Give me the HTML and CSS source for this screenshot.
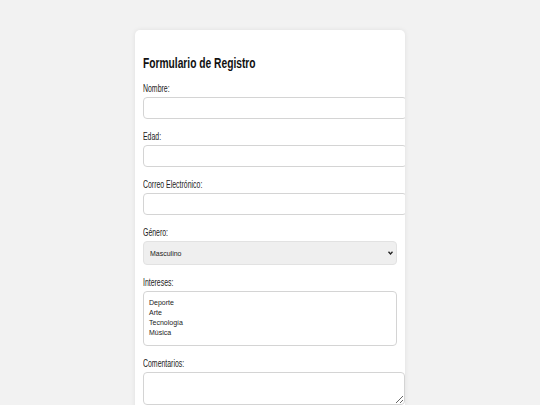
FILE: index.html
```html
<!DOCTYPE html>
<html lang="es">
<head>
<meta charset="utf-8">
<title>Formulario de Registro</title>
<link rel="stylesheet" href="styles.css">
</head>
<body>
<div class="page">
  <form class="card">
    <h2 class="title"><span class="narrow">Formulario de Registro</span></h2>
    <label class="label" for="nombre"><span class="narrow">Nombre:</span></label>
    <input class="field" type="text" id="nombre">
    <label class="label" for="edad"><span class="narrow">Edad:</span></label>
    <input class="field" type="text" id="edad">
    <label class="label" for="correo"><span class="narrow">Correo Electrónico:</span></label>
    <input class="field" type="text" id="correo">
    <label class="label" for="genero"><span class="narrow">Género:</span></label>
    <div class="select-wrap">
      <select class="select" id="genero">
        <option>Masculino</option>
        <option>Femenino</option>
      </select>
      <svg class="chevron" width="5" height="4" viewBox="0 0 5 4" aria-hidden="true"><path d="M0.5 0.8 L2.5 3 L4.5 0.8" fill="none" stroke="#222" stroke-width="1.3"/></svg>
    </div>
    <label class="label" for="intereses"><span class="narrow">Intereses:</span></label>
    <select class="multi" id="intereses" multiple>
      <option>Deporte</option>
      <option>Arte</option>
      <option>Tecnología</option>
      <option>Música</option>
    </select>
    <label class="label" for="comentarios"><span class="narrow">Comentarios:</span></label>
    <textarea class="area" id="comentarios"></textarea>
  </form>
</div>
</body>
</html>
```
FILE: styles.css
```css
html, body {
  margin: 0;
  padding: 0;
  background: #f2f2f2;
  font-family: "Liberation Sans", Arial, sans-serif;
  color: #1a1a1a;
}
.page {
  display: flex;
  justify-content: center;
  padding-top: 30px;
}
.card {
  width: 254px;
  padding: 8px 8px 20px;
  background: #fff;
  border-radius: 5px;
  box-shadow: 0 0 5px rgba(0, 0, 0, 0.08);
  overflow: hidden;
}
.narrow {
  display: inline-block;
  transform: scaleX(0.66);
  transform-origin: left center;
  white-space: nowrap;
}
.title {
  margin: 15px 0 9px;
  font-size: 15.5px;
  line-height: 19px;
  font-weight: bold;
  color: #111;
}
.label {
  display: block;
  font-size: 10.5px;
  line-height: 13px;
  padding-top: 1px;
  margin: 0 0 2px;
  color: #222;
}
.field {
  display: block;
  width: 100%;
  height: 10px;
  padding: 5px 4px;
  margin: 0 0 10px;
  border: 1px solid #d4d4d4;
  border-radius: 4px;
  background: #fff;
  font: inherit;
  font-size: 9px;
}
.select-wrap {
  position: relative;
  margin: 0 0 10px;
}
.select {
  display: block;
  box-sizing: border-box;
  width: 100%;
  height: 24px;
  margin: 0;
  padding: 0 6px;
  border: 1px solid #e2e2e2;
  border-radius: 4px;
  background: #efefef;
  font-family: inherit;
  font-size: 7px;
  color: #222;
  appearance: none;
  -webkit-appearance: none;
}
.chevron {
  position: absolute;
  right: 4px;
  top: 10px;
  pointer-events: none;
}
.multi {
  display: block;
  box-sizing: border-box;
  width: 100%;
  height: 55px;
  margin: 0 0 10px;
  padding: 7px 4px 4px;
  border: 1px solid #d4d4d4;
  border-radius: 4px;
  background: #fff;
  font-family: inherit;
  font-size: 7px;
  color: #222;
  overflow: hidden;
}
.multi option {
  padding: 0 1px;
  line-height: 10px;
  min-height: 10px;
  color: #222;
}
.area {
  display: block;
  width: 100%;
  height: 21px;
  padding: 5px 3px;
  margin: 0;
  border: 1px solid #d4d4d4;
  border-radius: 4px;
  font: inherit;
  font-size: 9px;
  resize: vertical;
}
```
